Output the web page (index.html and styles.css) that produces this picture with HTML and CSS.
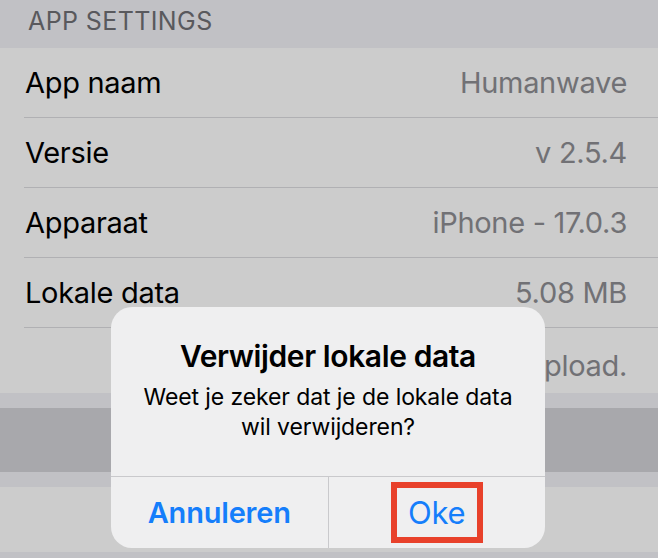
FILE: index.html
```html
<!DOCTYPE html>
<html lang="nl">
<head>
<meta charset="utf-8">
<title>App settings</title>
<link rel="stylesheet" href="styles.css">
</head>
<body>
<div class="screen">
  <div class="section-header">APP SETTINGS</div>
  <div class="group">
    <div class="row"><span class="label">App naam</span><span class="value">Humanwave</span></div>
    <div class="row"><span class="label">Versie</span><span class="value">v 2.5.4</span></div>
    <div class="row"><span class="label">Apparaat</span><span class="value">iPhone - 17.0.3</span></div>
    <div class="row"><span class="label">Lokale data</span><span class="value">5.08 MB</span></div>
    <div class="row row-last"><span class="label"></span><span class="value value-low">Forceer upload.</span></div>
  </div>
  <div class="gap"></div>
  <div class="band"></div>
  <div class="gap"></div>
  <div class="group">
    <div class="row row-last row-short"></div>
  </div>
  <div class="tail"></div>

  <div class="scrim"></div>

  <div class="alert" role="alertdialog">
    <div class="alert-body">
      <div class="alert-title">Verwijder lokale data</div>
      <div class="alert-msg">Weet je zeker dat je de lokale data<br>wil verwijderen?</div>
    </div>
    <div class="alert-actions">
      <div class="action action-bold">Annuleren</div>
      <div class="action"><span class="highlight">Oke</span></div>
    </div>
  </div>
</div>
</body>
</html>
```
FILE: styles.css
```css
* { box-sizing: border-box; }
html, body { margin: 0; padding: 0; }
body {
  font-family: Inter, "Noto Sans", sans-serif;
  background: #f2f2f7;
  width: 658px;
  height: 558px;
  overflow: hidden;
}
.screen {
  position: relative;
  width: 658px;
  height: 558px;
  overflow: hidden;
  background: #f2f2f7;
}
.section-header {
  height: 48px;
  padding: 7px 0 0 28px;
  font-size: 25px;
  line-height: 28px;
  color: #707075;
  letter-spacing: 0.4px;
}
.group { background: #ffffff; }
.row {
  height: 70px;
  margin-left: 24px;
  padding-right: 31px;
  border-bottom: 1px solid #dddde0;
  display: flex;
  align-items: center;
  justify-content: space-between;
  font-size: 29px;
  letter-spacing: -0.3px;
}
.row-last { border-bottom: none; height: 65px; }
.row-short { height: 65px; }
.label { color: #000; padding-left: 1px; }
.value { color: #8e8e93; }
.value-low { padding-top: 10px; }
.gap { height: 15px; }
.band { height: 64px; background: #d3d2d8; }
.tail { height: 10px; }

.scrim {
  position: absolute;
  inset: 0;
  background: rgba(0, 0, 0, 0.2);
}

.alert {
  position: absolute;
  left: 111px;
  top: 307px;
  width: 434px;
  height: 241px;
  border-radius: 21px;
  background: #efeff0;
  overflow: hidden;
  display: flex;
  flex-direction: column;
}
.alert-body {
  height: 170px;
  padding-top: 34px;
  text-align: center;
  border-bottom: 1px solid #c9c9cc;
}
.alert-title {
  font-size: 30px;
  font-weight: 600;
  line-height: 30px;
  color: #000;
  letter-spacing: -0.4px;
}
.alert-msg {
  margin-top: 11px;
  font-size: 23px;
  line-height: 30px;
  color: #000;
  letter-spacing: -0.1px;
}
.alert-actions {
  flex: 1;
  display: flex;
}
.action {
  flex: 1;
  display: flex;
  align-items: center;
  justify-content: center;
  font-size: 29px;
  color: #157efb;
  letter-spacing: -0.2px;
}
.action + .action { border-left: 1px solid #c9c9cc; }
.action-bold { font-weight: 600; }
.highlight {
  width: 92px;
  height: 61px;
  border: 6px solid #e8412b;
  display: flex;
  align-items: center;
  justify-content: center;
  font-size: 31px;
}
```
